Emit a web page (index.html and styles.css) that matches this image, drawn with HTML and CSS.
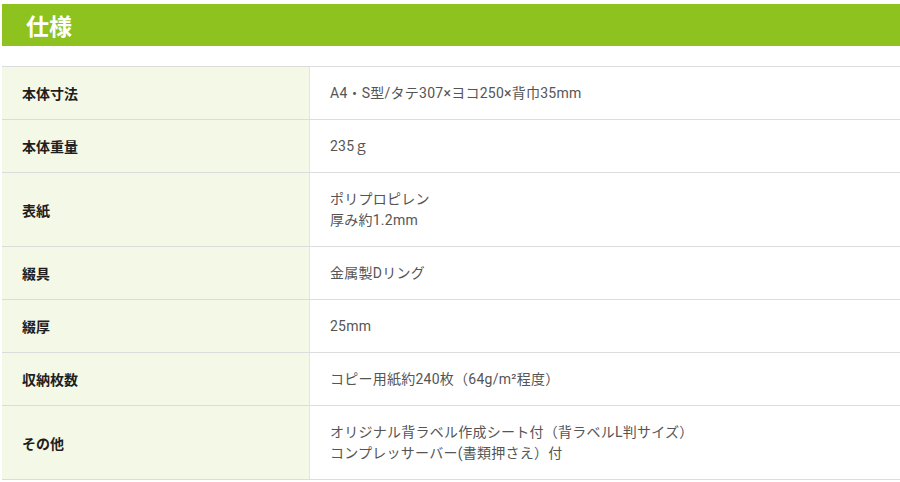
FILE: index.html
```html
<!DOCTYPE html>
<html lang="ja">
<head>
<meta charset="utf-8">
<link rel="stylesheet" href="styles.css">
</head>
<body>
<section class="spec">
  <h2 class="spec-title">仕様</h2>
  <table class="spec-table">
    <tr><th>本体寸法</th><td>A4・S型/タテ307×ヨコ250×背巾35mm</td></tr>
    <tr><th>本体重量</th><td>235ｇ</td></tr>
    <tr><th>表紙</th><td>ポリプロピレン<br>厚み約1.2mm</td></tr>
    <tr><th>綴具</th><td>金属製Dリング</td></tr>
    <tr><th>綴厚</th><td>25mm</td></tr>
    <tr><th>収納枚数</th><td>コピー用紙約240枚（64g/m²程度）</td></tr>
    <tr><th>その他</th><td>オリジナル背ラベル作成シート付（背ラベルL判サイズ）<br>コンプレッサーバー(書類押さえ）付</td></tr>
  </table>
</section>
</body>
</html>
```
FILE: styles.css
```css
html, body {
  margin: 0;
  padding: 0;
  background: #ffffff;
}
body {
  font-family: Roboto, "Noto Sans CJK JP", sans-serif;
  font-size: 14px;
  color: #555;
}
.spec {
  padding: 4px 0 0 2px;
}
.spec-title {
  margin: 0;
  height: 42px;
  line-height: 42px;
  padding-left: 24px;
  background: #8dc21f;
  color: #fff;
  font-size: 23px;
  font-weight: bold;
  font-family: "Noto Sans CJK JP", sans-serif;
}
.spec-table {
  margin-top: 20px;
  width: 100%;
  border-collapse: collapse;
  border-top: 1px solid #dcdcdc;
}
.spec-table th,
.spec-table td {
  border-bottom: 1px solid #dcdcdc;
  padding: 16px 20px 15px;
  line-height: 21px;
  text-align: left;
  vertical-align: middle;
}
.spec-table th {
  width: 267px;
  background: #f4f8e7;
  border-right: 1px solid #e2ebc5;
  color: #1e1e1e;
  font-weight: bold;
  font-family: "Noto Sans CJK JP", sans-serif;
}
.spec-table td {
  color: #555;
  letter-spacing: 0.25px;
}
```
